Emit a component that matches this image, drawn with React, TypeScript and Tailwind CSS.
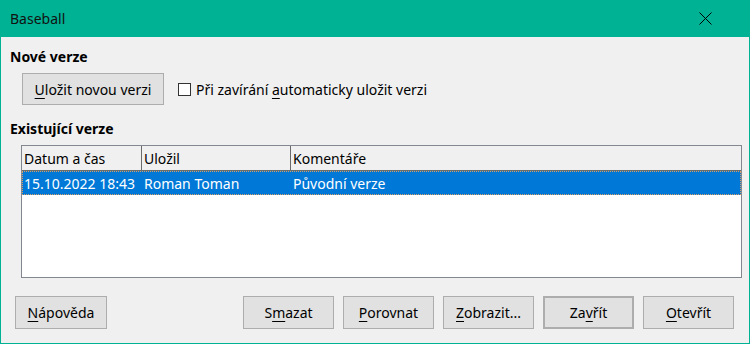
import React from 'react';

const font = { fontFamily: '"Noto Sans", "Open Sans", sans-serif' };

function Mn({ children }: { children: React.ReactNode }) {
  return <span className="underline underline-offset-[3px] decoration-1">{children}</span>;
}

function Btn({ children, className = '' }: { children: React.ReactNode; className?: string }) {
  return (
    <div
      className={`flex items-center justify-center bg-[#e1e1e1] border border-[#adadad] text-[14px] text-black ${className}`}
    >
      {children}
    </div>
  );
}

const cols = [
  { label: 'Datum a čas', w: 'w-[120px]' },
  { label: 'Uložil', w: 'w-[149px]' },
  { label: 'Komentáře', w: 'flex-1' },
];

export default function App() {
  return (
    <div style={font} className="w-[750px] h-[344px] flex flex-col bg-[#f0f0f0] border-x border-b border-[#00b294] text-black">
      {/* Title bar */}
      <div className="h-[37px] -mx-px bg-[#00b294] flex items-center justify-between pl-[10px] pr-[38px] shrink-0">
        <span className="text-[14px] text-[#111]">Baseball</span>
        <svg width="13" height="13" viewBox="0 0 13 13" className="text-black">
          <path d="M0.5 0.5 L12.5 12.5 M12.5 0.5 L0.5 12.5" stroke="currentColor" strokeWidth="1" fill="none" />
        </svg>
      </div>

      <div className="flex-1 flex flex-col pl-[9px] pr-[8px]">
        <div className="mt-[10px] font-bold text-[14px] leading-[20px]">Nové verze</div>

        <div className="mt-[6px] flex items-center">
          <Btn className="ml-[12px] w-[142px] h-[32px]">
            <span><Mn>U</Mn>ložit novou verzi</span>
          </Btn>
          <label className="ml-[14px] flex items-center gap-[5px] text-[14px]">
            <span className="w-[13px] h-[13px] border border-[#333] bg-white" />
            <span>Při zavírání <Mn>a</Mn>utomaticky uložit verzi</span>
          </label>
        </div>

        <div className="mt-[14px] font-bold text-[14px] leading-[20px]">Existující verze</div>

        <div className="mt-[6px] ml-[11px] w-[721px] h-[133px] border border-[#828790] bg-white flex flex-col text-[14px]">
          <div className="flex h-[25px] bg-[#f0f0f0] border-b border-[#6b6b6b]">
            {cols.map((c, i) => (
              <div
                key={c.label}
                className={`${c.w} flex items-center pl-[2px] ${i < cols.length - 1 ? 'border-r border-[#6b6b6b]' : ''}`}
              >
                {c.label}
              </div>
            ))}
          </div>
          <div className="flex h-[24px] bg-[#0078d7] text-white border border-dotted border-[#d9a066]">
            <div className="w-[120px] flex items-center pl-[1px]">15.10.2022 18:43</div>
            <div className="w-[149px] flex items-center pl-[1px]">Roman Toman</div>
            <div className="flex-1 flex items-center pl-[1px]">Původní verze</div>
          </div>
        </div>

        <div className="mt-[18px] flex items-center">
          <Btn className="ml-[5px] w-[92px] h-[33px]">
            <span><Mn>N</Mn>ápověda</span>
          </Btn>
          <div className="ml-auto mr-[7px] flex gap-[9px]">
            <Btn className="w-[91px] h-[33px]"><span>S<Mn>m</Mn>azat</span></Btn>
            <Btn className="w-[91px] h-[33px]"><span><Mn>P</Mn>orovnat</span></Btn>
            <Btn className="w-[91px] h-[33px]"><span><Mn>Z</Mn>obrazit...</span></Btn>
            <Btn className="w-[91px] h-[33px] border-2 border-[#0078d7]"><span>Za<Mn>v</Mn>řít</span></Btn>
            <Btn className="w-[91px] h-[33px]"><span><Mn>O</Mn>tevřít</span></Btn>
          </div>
        </div>
      </div>
    </div>
  );
}
